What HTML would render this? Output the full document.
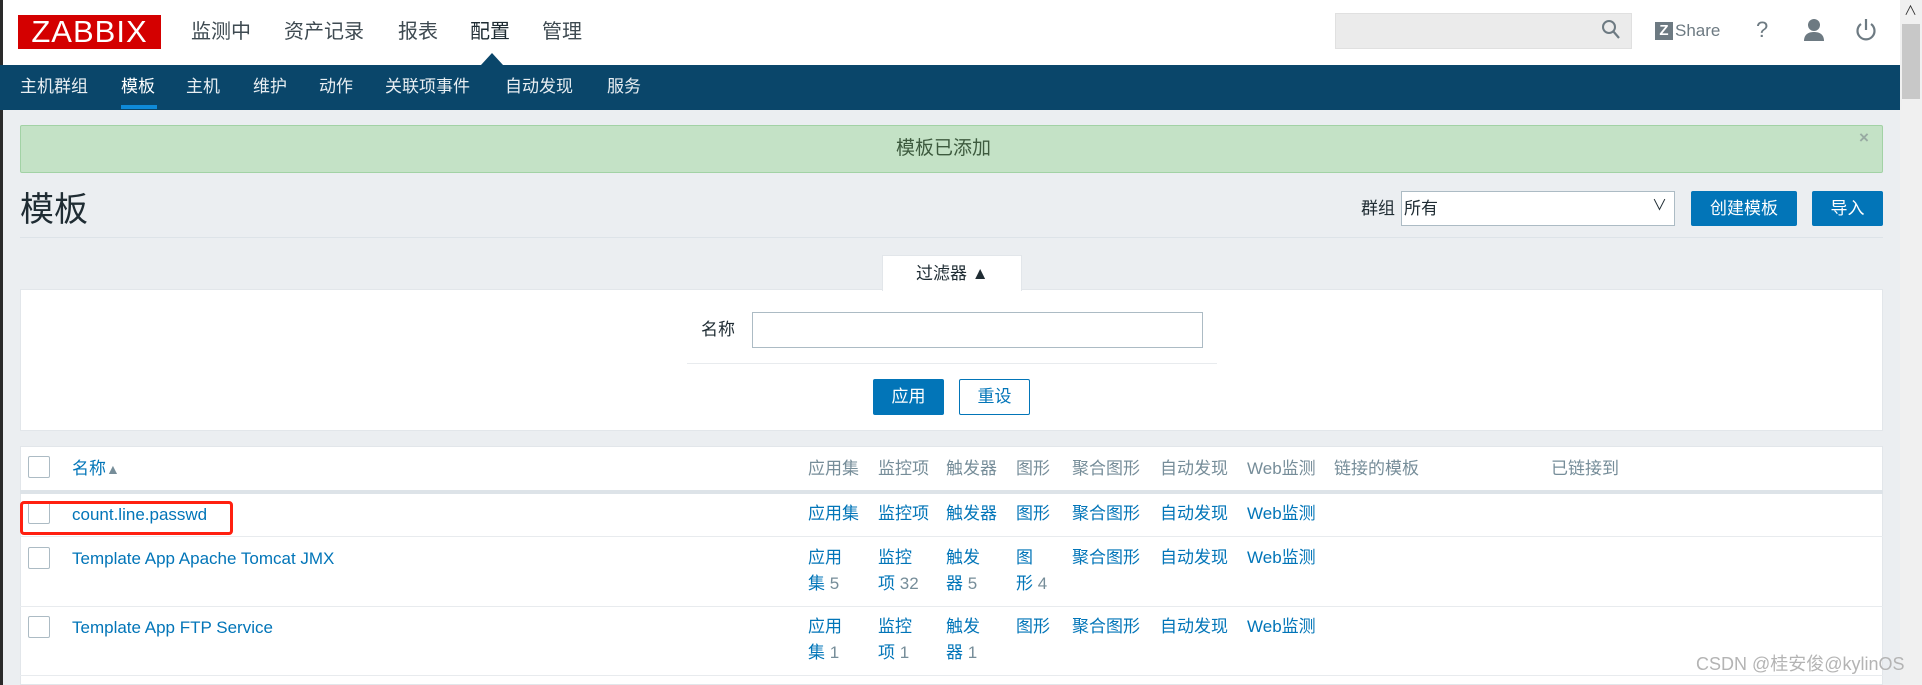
<!DOCTYPE html>
<html><head><meta charset="utf-8"><style>
*{margin:0;padding:0;box-sizing:border-box}
body{width:1922px;height:685px;overflow:hidden;background:#ebeef1;font-family:"Liberation Sans","Noto Sans CJK SC",sans-serif;position:relative;color:#1f2c33;line-height:1.2}
.a{position:absolute;white-space:nowrap}
.top{left:0;top:0;width:1900px;height:65px;background:#fff}
.nav{left:0;top:65px;width:1900px;height:45px;background:#0a466a}
.tn{font-size:20px;color:#3e4a51;top:20px}
.sn{font-size:17px;color:#e8eef2;top:77px}
.lnk{color:#0275b8}
.hd{color:#768d99}
.f17{font-size:17px}
.btn{background:#0275b8;color:#fff;font-size:17px;text-align:center;border-radius:2px}
.cb{width:22px;height:22px;border:1px solid #acbbc4;border-radius:2px;background:#fff}
</style></head><body>
<div class="a top"></div>
<div class="a" style="left:18px;top:15px;width:143px;height:34px;background:#d40000;color:#fff;font-size:31px;line-height:34px;text-align:center;letter-spacing:1px">ZABBIX</div>
<div class="a tn" style="left:191px">监测中</div>
<div class="a tn" style="left:284px">资产记录</div>
<div class="a tn" style="left:398px">报表</div>
<div class="a tn" style="left:470px;color:#1f2c33">配置</div>
<div class="a tn" style="left:542px">管理</div>
<div class="a" style="left:481px;top:53px;width:0;height:0;border-left:11px solid transparent;border-right:11px solid transparent;border-bottom:12px solid #0a466a"></div>
<div class="a" style="left:1335px;top:13px;width:297px;height:36px;background:#ebebeb;border:1px solid #e0e0e0"></div>
<svg class="a" style="left:1601px;top:19px" width="20" height="22" viewBox="0 0 20 22"><circle cx="8" cy="8" r="6" fill="none" stroke="#6d7a82" stroke-width="2"/><path d="M12 12l6 7" stroke="#6d7a82" stroke-width="2.2"/></svg>
<div class="a" style="left:1655px;top:22px;width:18px;height:18px;background:#6d7a82;color:#fff;font-size:15px;font-weight:bold;line-height:18px;text-align:center">Z</div>
<div class="a" style="left:1675px;top:21px;font-size:17px;color:#6d7a82">Share</div>
<div class="a" style="left:1756px;top:17px;font-size:22px;color:#6d7a82">?</div>
<svg class="a" style="left:1803px;top:18px" width="22" height="24" viewBox="0 0 22 24"><circle cx="11" cy="7" r="6" fill="#6d7a82"/><path d="M1 23c0-7 5-9 10-9s10 2 10 9z" fill="#6d7a82"/></svg>
<svg class="a" style="left:1855px;top:17px" width="22" height="26" viewBox="0 0 22 26"><path d="M6 7a8.5 8.5 0 1 0 10 0" fill="none" stroke="#6d7a82" stroke-width="2.2"/><path d="M11 2v11" stroke="#6d7a82" stroke-width="2.2"/></svg>
<div class="a" style="left:1900px;top:0;width:22px;height:685px;background:#f0f0f0"></div>
<div class="a" style="left:1902px;top:24px;width:18px;height:75px;background:#c8c8c8"></div>
<div class="a" style="left:1904px;top:3px;font-size:13px;color:#333">∧</div>
<div class="a" style="left:0;top:0;width:3px;height:685px;background:#2a2a2a"></div>
<div class="a nav"></div>
<div class="a sn" style="left:20px">主机群组</div>
<div class="a sn" style="left:121px;color:#fff">模板</div>
<div class="a" style="left:121px;top:105px;width:36px;height:4px;background:#0f8ad8"></div>
<div class="a sn" style="left:186px">主机</div>
<div class="a sn" style="left:253px">维护</div>
<div class="a sn" style="left:319px">动作</div>
<div class="a sn" style="left:385px">关联项事件</div>
<div class="a sn" style="left:505px">自动发现</div>
<div class="a sn" style="left:607px">服务</div>
<div class="a" style="left:20px;top:125px;width:1863px;height:48px;background:#c4e2c6;border:1px solid #a2d2a5;border-radius:2px"></div>
<div class="a" style="left:896px;top:138px;font-size:19px;color:#3d5a3e">模板已添加</div>
<div class="a" style="left:1859px;top:128px;font-size:17px;color:#98aaa2;font-weight:bold">×</div>
<div class="a" style="left:20px;top:190px;font-size:34px;color:#1f2c33">模板</div>
<div class="a" style="left:1361px;top:199px;font-size:17px">群组</div>
<div class="a" style="left:1401px;top:191px;width:274px;height:35px;background:#fff;border:1px solid #acbbc4"></div>
<div class="a" style="left:1404px;top:199px;font-size:17px">所有</div>
<div class="a" style="left:1652px;top:197px;font-size:15px">∨</div>
<div class="a btn" style="left:1691px;top:191px;width:106px;height:35px;line-height:35px">创建模板</div>
<div class="a btn" style="left:1812px;top:191px;width:71px;height:35px;line-height:35px">导入</div>
<div class="a" style="left:20px;top:237px;width:1863px;height:1px;background:#dde3e8"></div>
<div class="a" style="left:20px;top:289px;width:1863px;height:142px;background:#fff;border:1px solid #e2e6ea"></div>
<div class="a" style="left:882px;top:255px;width:140px;height:36px;background:#fff;border:1px solid #e2e6ea;border-bottom:none"></div>
<div class="a" style="left:916px;top:264px;font-size:17px">过滤器 ▲</div>
<div class="a" style="left:701px;top:320px;font-size:17px">名称</div>
<div class="a" style="left:752px;top:312px;width:451px;height:36px;border:1px solid #acbbc4;background:#fff"></div>
<div class="a" style="left:687px;top:363px;width:530px;height:1px;background:#e8ebee"></div>
<div class="a btn" style="left:873px;top:379px;width:71px;height:36px;line-height:36px">应用</div>
<div class="a" style="left:959px;top:379px;width:71px;height:36px;line-height:34px;border:1px solid #0275b8;border-radius:2px;color:#0275b8;text-align:center;font-size:17px;background:#fff">重设</div>
<div class="a" style="left:20px;top:446px;width:1863px;height:239px;background:#fff;border:1px solid #e2e6ea"></div>
<div class="a" style="left:20px;top:490px;width:1863px;height:4px;background:#dde3e8"></div>
<div class="a" style="left:20px;top:536px;width:1863px;height:1px;background:#e8ebee"></div>
<div class="a" style="left:20px;top:606px;width:1863px;height:1px;background:#e8ebee"></div>
<div class="a" style="left:20px;top:675px;width:1863px;height:1px;background:#e8ebee"></div>
<div class="a cb" style="left:28px;top:456px"></div>
<div class="a cb" style="left:28px;top:502px"></div>
<div class="a cb" style="left:28px;top:547px"></div>
<div class="a cb" style="left:28px;top:616px"></div>
<div class="a" style="left:20px;top:501px;width:213px;height:34px;border:3px solid #ff2010;border-radius:4px"></div>
<div class="a f17 lnk" style="left:72px;top:459px">名称<span style="color:#768d99;font-size:14px">▲</span></div>
<div class="a f17 hd" style="left:808px;top:459px">应用集</div>
<div class="a f17 hd" style="left:878px;top:459px">监控项</div>
<div class="a f17 hd" style="left:946px;top:459px">触发器</div>
<div class="a f17 hd" style="left:1016px;top:459px">图形</div>
<div class="a f17 hd" style="left:1072px;top:459px">聚合图形</div>
<div class="a f17 hd" style="left:1160px;top:459px">自动发现</div>
<div class="a f17 hd" style="left:1247px;top:459px">Web监测</div>
<div class="a f17 hd" style="left:1334px;top:459px">链接的模板</div>
<div class="a f17 hd" style="left:1551px;top:459px">已链接到</div>
<div class="a f17 lnk" style="left:72px;top:505px">count.line.passwd</div>
<div class="a f17 lnk" style="left:808px;top:504px">应用集</div>
<div class="a f17 lnk" style="left:878px;top:504px">监控项</div>
<div class="a f17 lnk" style="left:946px;top:504px">触发器</div>
<div class="a f17 lnk" style="left:1016px;top:504px">图形</div>
<div class="a f17 lnk" style="left:1072px;top:504px">聚合图形</div>
<div class="a f17 lnk" style="left:1160px;top:504px">自动发现</div>
<div class="a f17 lnk" style="left:1247px;top:504px">Web监测</div>
<div class="a f17 lnk" style="left:72px;top:549px">Template App Apache Tomcat JMX</div>
<div class="a f17 lnk" style="left:808px;top:545px;line-height:26px">应用<br>集 <span class="hd">5</span></div>
<div class="a f17 lnk" style="left:878px;top:545px;line-height:26px">监控<br>项 <span class="hd">32</span></div>
<div class="a f17 lnk" style="left:946px;top:545px;line-height:26px">触发<br>器 <span class="hd">5</span></div>
<div class="a f17 lnk" style="left:1016px;top:545px;line-height:26px">图<br>形 <span class="hd">4</span></div>
<div class="a f17 lnk" style="left:1072px;top:548px">聚合图形</div>
<div class="a f17 lnk" style="left:1160px;top:548px">自动发现</div>
<div class="a f17 lnk" style="left:1247px;top:548px">Web监测</div>
<div class="a f17 lnk" style="left:72px;top:618px">Template App FTP Service</div>
<div class="a f17 lnk" style="left:808px;top:614px;line-height:26px">应用<br>集 <span class="hd">1</span></div>
<div class="a f17 lnk" style="left:878px;top:614px;line-height:26px">监控<br>项 <span class="hd">1</span></div>
<div class="a f17 lnk" style="left:946px;top:614px;line-height:26px">触发<br>器 <span class="hd">1</span></div>
<div class="a f17 lnk" style="left:1016px;top:617px">图形</div>
<div class="a f17 lnk" style="left:1072px;top:617px">聚合图形</div>
<div class="a f17 lnk" style="left:1160px;top:617px">自动发现</div>
<div class="a f17 lnk" style="left:1247px;top:617px">Web监测</div>
<div class="a" style="left:1696px;top:654px;font-size:18px;color:#b4b4b4">CSDN @桂安俊@kylinOS</div>
</body></html>
